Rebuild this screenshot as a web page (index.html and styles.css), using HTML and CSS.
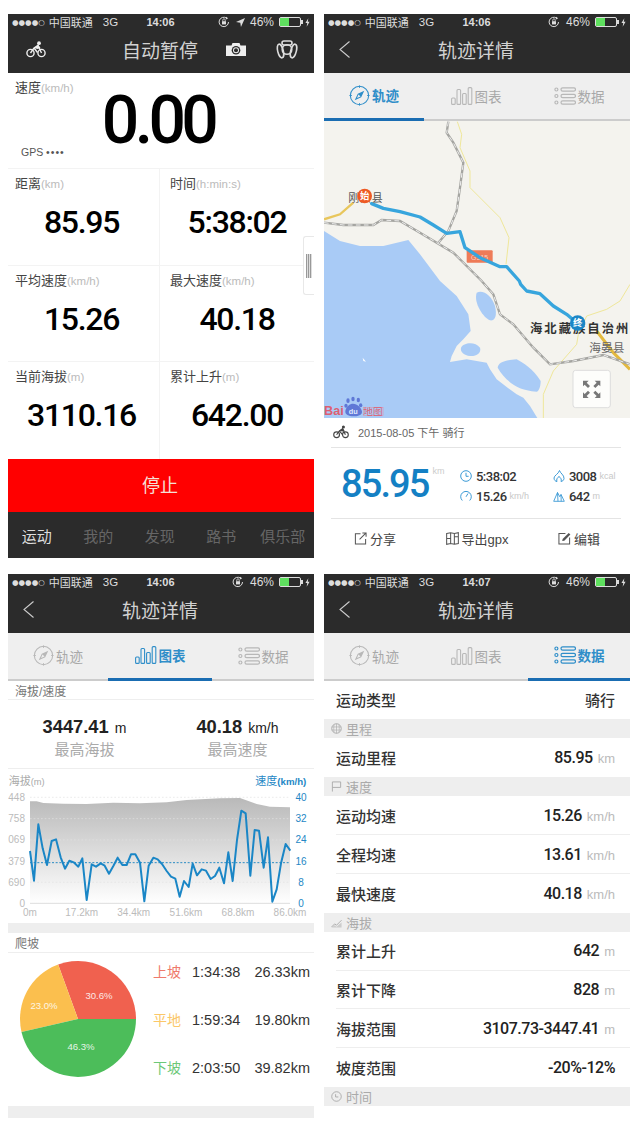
FILE: index.html
```html
<!DOCTYPE html>
<html lang="en">
<head>
    <meta charset="UTF-8">
    <meta name="viewport" content="width=device-width, initial-scale=1.0">
    <title>骑行记录</title>
    <link rel="stylesheet" href="styles.css">
</head>
<body>
    <!-- shared icons -->
    <svg class="sprite" aria-hidden="true">
        <symbol id="i-bike" viewBox="0 0 20 17">
            <g fill="none" stroke="currentColor" stroke-width="1.4">
                <circle cx="4.5" cy="12" r="3.6"/>
                <circle cx="15.5" cy="12" r="3.6"/>
                <path d="M4.5 12 8 7l4-2.500 3.500 7.500M8 7l3.500 4.500"/>
            </g>
            <circle cx="13" cy="2.200" r="1.900" fill="currentColor"/>
            <path d="M8 7l4-3.500 2.500 3.500-3 1z" fill="currentColor"/>
        </symbol>
        <symbol id="i-lock" viewBox="0 0 12 12">
            <path d="M10.500 6A4.700 4.700 0 1 1 8.500 2.100" fill="none" stroke="currentColor"/>
            <path d="M8 .8 10.200 2.300 8 3.600z" fill="currentColor"/>
            <rect x="4" y="5.200" width="4" height="3.200" fill="currentColor"/>
            <path d="M4.800 5.200V4a1.200 1.200 0 0 1 2.400 0v1.200" fill="none" stroke="currentColor" stroke-width=".8"/>
        </symbol>
        <symbol id="i-bolt" viewBox="0 0 6 10">
            <path d="M4 0 .5 5.500H2.700L2 10l3.500-5.800H3.300z" fill="currentColor"/>
        </symbol>
        <symbol id="i-compass" viewBox="0 0 22 22">
            <circle cx="11" cy="11" r="9.600" fill="none" stroke="currentColor" stroke-width="1.100"/>
            <path d="M11 .5v2.500M11 19v2.500M.5 11H3M19 11h2.500" stroke="currentColor"/>
            <path d="M16 6 12.800 12.800 6 16 9.200 9.200z M9.900 9.900 8.400 13.600 12.100 12.100z" fill="currentColor" fill-rule="evenodd"/>
        </symbol>
        <symbol id="i-bars" viewBox="0 0 22 18">
            <g fill="none" stroke="currentColor" stroke-width="1.100">
                <rect x=".6" y="11" width="3.600" height="6.400" rx="1"/>
                <rect x="6" y="2.500" width="3.600" height="14.900" rx="1"/>
                <rect x="11.600" y="6.500" width="3.600" height="10.900" rx="1"/>
                <rect x="17.200" y=".6" width="3.600" height="16.800" rx="1"/>
            </g>
        </symbol>
        <symbol id="i-list" viewBox="0 0 22 18">
            <g fill="none" stroke="currentColor" stroke-width="1.200">
                <circle cx="2.400" cy="2.500" r="1.500"/>
                <circle cx="2.400" cy="9" r="1.500"/>
                <circle cx="2.400" cy="15.500" r="1.500"/>
                <rect x="7" y=".8" width="14.500" height="3.400" rx="1.700"/>
                <rect x="7" y="7.300" width="14.500" height="3.400" rx="1.700"/>
                <rect x="7" y="13.800" width="14.500" height="3.400" rx="1.700"/>
            </g>
        </symbol>
        <symbol id="i-clock" viewBox="0 0 12 12">
            <circle cx="6" cy="6" r="5.300" fill="none" stroke="currentColor"/>
            <path d="M6 2.800V6.300H8.600" fill="none" stroke="currentColor"/>
        </symbol>
        <symbol id="i-gauge" viewBox="0 0 12 12">
            <path d="M2.300 10.500a5.300 5.300 0 1 1 7.400 0" fill="none" stroke="currentColor"/>
            <path d="M6 6.800 8 3.500" stroke="currentColor"/>
        </symbol>
        <symbol id="i-flame" viewBox="0 0 12 12">
            <path d="M6.500.5C7 3 11.300 5 11 8.500 10.800 10.500 9 11.500 8 11.500 9 9.500 7.500 7.500 6 6.500 4.500 7.500 3 9.500 4 11.500 2.500 11.500 1 10 1 8 1 5.500 5.500 4 6.500.5z" fill="none" stroke="currentColor"/>
        </symbol>
        <symbol id="i-peak" viewBox="0 0 12 12">
            <path d="M.7 11.300 4.500 2.500 6.700 6.700 8 4.500 11.300 11.300zM4.500 2.500 5 11.300M8 4.500 8.200 11.300" fill="none" stroke="currentColor" stroke-width=".9"/>
        </symbol>
        <symbol id="i-share" viewBox="0 0 14 14">
            <path d="M7 2H1.500V13H12.500V7.500M6 8 13 1M9 1H13V5" fill="none" stroke="currentColor" stroke-width="1.100"/>
        </symbol>
        <symbol id="i-export" viewBox="0 0 14 14">
            <path d="M.7 1.500 5 .7 9 1.500 13.300.7V12.500L9 13.300 5 12.500.7 13.300zM5 .7V12.500M9 1.500V13.300M.7 7H5M9 5H13.300" fill="none" stroke="currentColor" stroke-width="1.100"/>
        </symbol>
        <symbol id="i-edit" viewBox="0 0 14 14">
            <path d="M8 1.500H1V13H12.500V6" fill="none" stroke="currentColor" stroke-width="1.100"/>
            <path d="M4.500 9.800 5 7.500 11.500 1 13.300 2.800 6.800 9.300z" fill="currentColor"/>
        </symbol>
        <symbol id="i-globe" viewBox="0 0 12 12">
            <circle cx="6" cy="6" r="5.200" fill="none" stroke="currentColor"/>
            <path d="M1 4.300H11M1 7.700H11M6 .8V11.200M3.500 1.500C2.800 4 2.800 8 3.500 10.500M8.500 1.500C9.200 4 9.200 8 8.500 10.500" fill="none" stroke="currentColor" stroke-width=".7"/>
        </symbol>
        <symbol id="i-flag" viewBox="0 0 12 12">
            <path d="M1.500 11.500V1H10.500V7H1.500" fill="none" stroke="currentColor"/>
        </symbol>
        <symbol id="i-slope" viewBox="0 0 12 12">
            <path d="M.5 11 4 7.500 6 9 11.500 3.500" fill="none" stroke="currentColor"/>
            <path d="M.5 11.500H11.500V6L6 10.500 4 9z" fill="currentColor" opacity=".5"/>
        </symbol>
        <symbol id="i-play" viewBox="0 0 12 12">
            <circle cx="6" cy="6" r="5.200" fill="none" stroke="currentColor"/>
            <path d="M5 3.500V6.500H8" fill="none" stroke="currentColor"/>
        </symbol>
    </svg>

    <div class="sheet">

        <!-- riding screen -->
        <section class="phone">
            <div class="status">
                <div class="status-left"><span class="dots">●●●●○</span><span>中国联通</span><span class="net">3G</span></div>
                <div class="status-time">14:06</div>
                <div class="status-right">
                    <svg class="s-lock"><use href="#i-lock"/></svg>
                    <svg class="s-arrow" viewBox="0 0 10 10"><path d="M10 0 0 4.500 4.800 5.200 5.500 10z" fill="currentColor"/></svg>
                    <span>46%</span>
                    <span class="batt"><i></i></span>
                    <svg class="s-bolt"><use href="#i-bolt"/></svg>
                </div>
            </div>
            <div class="nav nav-ride">
                <svg class="nav-bike"><use href="#i-bike"/></svg>
                <h1>自动暂停</h1>
                <div class="nav-tools">
                    <svg class="nav-camera" viewBox="0 0 20 13">
                        <path d="M0 2.500H5.500L6.500 0H13.500L14.500 2.500H20V13H0z" fill="#eee"/>
                        <circle cx="10" cy="7.300" r="4.300" fill="#2b2b2b"/>
                        <circle cx="10" cy="7.300" r="3" fill="#eee"/>
                        <circle cx="10" cy="7.300" r="2" fill="#2b2b2b"/>
                    </svg>
                    <svg class="nav-friends" viewBox="0 0 22 20">
                        <g fill="none" stroke="#ddd" stroke-width="1.600">
                            <rect x="6" y="1" width="10" height="4" rx="2"/>
                            <circle cx="11" cy="9.500" r="4.800"/>
                            <ellipse cx="4.500" cy="11" rx="2.800" ry="7" transform="rotate(-14 4.500 11)"/>
                            <ellipse cx="17.500" cy="11" rx="2.800" ry="7" transform="rotate(14 17.500 11)"/>
                        </g>
                    </svg>
                </div>
            </div>
            <div class="ride-grid">
                <div class="cell cell-speed">
                    <div class="cell-label">速度<span>(km/h)</span></div>
                    <div class="speed-num">0.00</div>
                    <div class="gps">GPS <span>••••</span></div>
                </div>
                <div class="cell">
                    <div class="cell-label">距离<span>(km)</span></div>
                    <div class="cell-num">85.95</div>
                </div>
                <div class="cell">
                    <div class="cell-label">时间<span>(h:min:s)</span></div>
                    <div class="cell-num">5:38:02</div>
                </div>
                <div class="cell">
                    <div class="cell-label">平均速度<span>(km/h)</span></div>
                    <div class="cell-num">15.26</div>
                </div>
                <div class="cell">
                    <div class="cell-label">最大速度<span>(km/h)</span></div>
                    <div class="cell-num">40.18</div>
                </div>
                <div class="cell">
                    <div class="cell-label">当前海拔<span>(m)</span></div>
                    <div class="cell-num">3110.16</div>
                </div>
                <div class="cell">
                    <div class="cell-label">累计上升<span>(m)</span></div>
                    <div class="cell-num">642.00</div>
                </div>
            </div>
            <div class="side-handle"><i></i></div>
            <button class="stop">停止</button>
            <div class="bottom-tabs">
                <span class="on">运动</span><span>我的</span><span>发现</span><span>路书</span><span>俱乐部</span>
            </div>
        </section>

        <!-- track tab -->
        <section class="phone">
            <div class="status">
                <div class="status-left"><span class="dots">●●●●○</span><span>中国联通</span><span class="net">3G</span></div>
                <div class="status-time">14:06</div>
                <div class="status-right">
                    <svg class="s-lock"><use href="#i-lock"/></svg>
                    <span>46%</span>
                    <span class="batt"><i></i></span>
                    <svg class="s-bolt"><use href="#i-bolt"/></svg>
                </div>
            </div>
            <div class="nav">
                <svg class="back" viewBox="0 0 11 17"><path d="M10.500.5 1 8.500 10.500 16.500" fill="none" stroke="#ccc" stroke-width="1.100"/></svg>
                <h1>轨迹详情</h1>
                <div></div>
            </div>
            <div class="tabs">
                <div class="tab on"><svg class="t-compass"><use href="#i-compass"/></svg>轨迹</div>
                <div class="tab"><svg class="t-icon"><use href="#i-bars"/></svg>图表</div>
                <div class="tab"><svg class="t-icon"><use href="#i-list"/></svg>数据</div>
            </div>
            <svg class="map" viewBox="12 360 918 891">
                <rect x="12" y="360" width="918" height="891" fill="#f4f3ee"/>
                <g fill="#a9cbf6">
                    <path d="M12 690 60 720 120 735 190 735 265 717 300 760 360 840 410 885 445 940 452 990 430 1015 410 1035 395 1065 390 1083 440 1075 500 1085 510 1105 530 1135 560 1158 590 1180 610 1190 630 1215 652 1251H12z"/>
                    <path d="M470 875C490 865 515 885 525 915 532 945 525 960 510 958 490 950 460 905 470 875z"/>
                    <path d="M423 1040C430 1025 465 1020 480 1040 485 1055 470 1066 450 1065 432 1063 420 1052 423 1040z"/>
                    <path d="M533 1100C535 1085 550 1078 590 1075 610 1085 640 1105 662 1140 662 1160 655 1172 650 1172 630 1172 610 1165 600 1162 575 1150 550 1130 533 1100z"/>
                </g>
                <path d="M128 1070 138 1082 130 1080z" fill="#fff"/>
                <g fill="none" stroke="#efe79a" stroke-width="3">
                    <path d="M412 362 425 400 420 440 450 510 450 560 540 650 567 710 558 790"/>
                    <path d="M930 850 900 900 860 925 800 945 775 1000 770 1030 700 1110 670 1180V1251"/>
                </g>
                <path d="M12 655 60 640 100 605" fill="none" stroke="#e8c65c" stroke-width="7"/>
                <path d="M830 990 880 1055 930 1105" fill="none" stroke="#e3b93f" stroke-width="9"/>
                <g fill="none" stroke="#a5a5a1" stroke-width="7">
                    <path d="M385 362 380 395 400 425 430 485 420 560 410 630 385 690 355 725"/>
                    <path d="M12 665 70 672 160 672 185 657 240 660 300 695 400 755 485 840 520 880 540 940 580 970 640 1040 690 1090 760 1080 850 1062 930 1090"/>
                </g>
                <g fill="none" stroke="#eee" stroke-width="3" stroke-dasharray="14 10">
                    <path d="M385 362 380 395 400 425 430 485 420 560 410 630 385 690 355 725"/>
                    <path d="M12 665 70 672 160 672 185 657 240 660 300 695 400 755 485 840 520 880 540 940 580 970 640 1040 690 1090 760 1080 850 1062 930 1090"/>
                </g>
                <rect x="440" y="748" width="78" height="37" rx="3" fill="#ee7b58"/>
                <text x="479" y="777" class="m-badge">G315</text>
                <path d="M155 608 190 622 240 632 300 648 340 672 380 697 420 692 435 740 480 770 540 797 560 797 598 840 602 850 620 870 660 878 700 915 740 940 770 965" fill="none" stroke="#37a5dd" stroke-width="10" stroke-linejoin="round" stroke-linecap="round"/>
                <text x="85" y="602" class="m-county">刚察县</text>
                <circle cx="134" cy="585" r="22" fill="#ee5a24"/>
                <text x="134" y="595" class="m-pin">始</text>
                <text x="630" y="995" class="m-region">海北藏族自治州</text>
                <circle cx="773" cy="966" r="23" fill="#1b86c6"/>
                <text x="773" y="976" class="m-pin">终</text>
                <text x="808" y="1052" class="m-town">海晏县</text>
                <rect x="759" y="1108" width="112" height="112" rx="8" fill="#fdfdfb" stroke="#ddd" stroke-width="3"/>
                <path d="M789 1139H806L800 1145 810 1155 804 1161 794 1151 789 1156zM841 1139H824L830 1145 820 1155 826 1161 836 1151 841 1156zM789 1191H806L800 1185 810 1175 804 1169 794 1179 789 1174zM841 1191H824L830 1185 820 1175 826 1169 836 1179 841 1174z" fill="#777"/>
                <text x="12" y="1243" class="m-bai">Bai</text>
                <g fill="#5f78d6">
                    <ellipse cx="84" cy="1199" rx="5" ry="7"/>
                    <ellipse cx="99" cy="1194" rx="5" ry="7"/>
                    <ellipse cx="115" cy="1197" rx="5" ry="7"/>
                    <ellipse cx="122" cy="1213" rx="5" ry="6"/>
                    <ellipse cx="78" cy="1214" rx="5" ry="6"/>
                    <path d="M76 1230C78 1216 90 1208 99 1208 112 1208 124 1220 126 1232 126 1242 114 1246 100 1246 86 1246 75 1241 76 1230z"/>
                </g>
                <text x="100" y="1240" class="m-du">du</text>
                <rect x="131" y="1219" width="58" height="25" fill="none" stroke="#e2899a" stroke-width="1.500"/>
                <text x="130" y="1242" class="m-map">地图</text>
            </svg>
            <div class="ride-info">
                <svg class="info-bike"><use href="#i-bike"/></svg>
                <span>2015-08-05 下午 骑行</span>
            </div>
            <div class="summary">
                <div class="sum-big">85.95<sup>km</sup></div>
                <div class="sum-col">
                    <div><svg><use href="#i-clock"/></svg><b>5:38:02</b></div>
                    <div><svg><use href="#i-gauge"/></svg><b>15.26</b><small>km/h</small></div>
                </div>
                <div class="sum-col">
                    <div><svg><use href="#i-flame"/></svg><b>3008</b><small>kcal</small></div>
                    <div><svg><use href="#i-peak"/></svg><b>642</b><small>m</small></div>
                </div>
            </div>
            <div class="actions">
                <div><svg><use href="#i-share"/></svg>分享</div>
                <div><svg><use href="#i-export"/></svg>导出gpx</div>
                <div><svg><use href="#i-edit"/></svg>编辑</div>
            </div>
        </section>

        <!-- chart tab -->
        <section class="phone">
            <div class="status">
                <div class="status-left"><span class="dots">●●●●○</span><span>中国联通</span><span class="net">3G</span></div>
                <div class="status-time">14:06</div>
                <div class="status-right">
                    <svg class="s-lock"><use href="#i-lock"/></svg>
                    <span>46%</span>
                    <span class="batt"><i></i></span>
                    <svg class="s-bolt"><use href="#i-bolt"/></svg>
                </div>
            </div>
            <div class="nav">
                <svg class="back" viewBox="0 0 11 17"><path d="M10.500.5 1 8.500 10.500 16.500" fill="none" stroke="#ccc" stroke-width="1.100"/></svg>
                <h1>轨迹详情</h1>
                <div></div>
            </div>
            <div class="tabs">
                <div class="tab"><svg class="t-compass"><use href="#i-compass"/></svg>轨迹</div>
                <div class="tab on"><svg class="t-icon"><use href="#i-bars"/></svg>图表</div>
                <div class="tab"><svg class="t-icon"><use href="#i-list"/></svg>数据</div>
            </div>
            <div class="sec-title">海拔/速度</div>
            <div class="peaks">
                <div><div class="peak-val">3447.41<span>m</span></div><div class="peak-label">最高海拔</div></div>
                <div><div class="peak-val">40.18<span>km/h</span></div><div class="peak-label">最高速度</div></div>
            </div>
            <svg class="chart" viewBox="24 -3 918 462">
                <defs>
                    <linearGradient id="elev" x1="0" y1="0" x2="0" y2="1">
                        <stop offset="0" stop-color="#b9b9b9"/>
                        <stop offset="1" stop-color="#ffffff"/>
                    </linearGradient>
                </defs>
                <text x="26" y="45" class="c-title">海拔<tspan class="c-unit">(m)</tspan></text>
                <text x="919" y="45" class="c-title c-blue c-end">速度<tspan class="c-bold">(km/h)</tspan></text>
                <path d="M90 94 110 94 130 99 190 101 260 102 340 98 420 100 500 97 560 90 660 85 720 84 770 102 810 110 870 112V400H90z" fill="url(#elev)"/>
                <g stroke="#e2e2e2" stroke-width="2" stroke-dasharray="5 6">
                    <path d="M90 82H870M90 146H870M90 210H870M90 273H870M90 337H870"/>
                </g>
                <path d="M90 400H870" stroke="#ccc" stroke-width="2"/>
                <path d="M90 278H870" stroke="#2b8cc4" stroke-width="3" stroke-dasharray="6 5"/>
                <polyline fill="none" stroke="#1a86c6" stroke-width="6" stroke-linejoin="round"
                    points="90,243 102,332 115,163 128,235 141,285 155,213 168,208 182,262 195,296 208,272 221,277 235,290 247,265 260,390 275,283 288,290 302,280 314,287 327,311 340,288 353,263 367,285 380,285 393,253 406,253 420,278 433,394 446,287 460,263 473,268 486,282 500,303 513,320 526,326 539,380 552,333 566,351 578,281 591,316 605,298 618,302 632,327 645,318 658,293 672,340 685,247 698,333 711,210 724,122 737,130 751,317 764,180 777,182 791,293 804,202 817,395 830,358 843,280 857,222 871,242"/>
                <g class="c-axis c-end">
                    <text x="75" y="92">448</text>
                    <text x="75" y="156">758</text>
                    <text x="75" y="220">069</text>
                    <text x="75" y="284">379</text>
                    <text x="75" y="347">690</text>
                    <text x="75" y="410">0</text>
                </g>
                <g class="c-axis c-blue c-mid">
                    <text x="903" y="92">40</text>
                    <text x="903" y="156">32</text>
                    <text x="903" y="220">24</text>
                    <text x="903" y="284">16</text>
                    <text x="903" y="347">8</text>
                    <text x="903" y="410">0</text>
                </g>
                <g class="c-axis c-mid">
                    <text x="90" y="438">0m</text>
                    <text x="245" y="438">17.2km</text>
                    <text x="401" y="438">34.4km</text>
                    <text x="558" y="438">51.6km</text>
                    <text x="714" y="438">68.8km</text>
                    <text x="870" y="438">86.0km</text>
                </g>
            </svg>
            <div class="band band-thin"></div>
            <div class="sec-title">爬坡</div>
            <div class="climb">
                <svg class="pie" viewBox="-60 -60 120 120">
                    <path d="M0 0 58 0A58 58 0 0 0 -19.840 -54.500z" fill="#f0614f"/>
                    <path d="M0 0 -19.840 -54.500A58 58 0 0 0 -56.500 13z" fill="#fbbf4e"/>
                    <path d="M0 0 -56.500 13A58 58 0 0 0 58 0z" fill="#4cbd5a"/>
                    <text x="21" y="-20" class="pie-text">30.6%</text>
                    <text x="-34" y="-10" class="pie-text">23.0%</text>
                    <text x="3" y="31" class="pie-text">46.3%</text>
                </svg>
                <div class="climb-list">
                    <div class="climb-row"><span class="c-up">上坡</span><span>1:34:38</span><span>26.33km</span></div>
                    <div class="climb-row"><span class="c-flat">平地</span><span>1:59:34</span><span>19.80km</span></div>
                    <div class="climb-row"><span class="c-down">下坡</span><span>2:03:50</span><span>39.82km</span></div>
                </div>
            </div>
            <div class="band band-end"></div>
        </section>

        <!-- data tab -->
        <section class="phone">
            <div class="status">
                <div class="status-left"><span class="dots">●●●●○</span><span>中国联通</span><span class="net">3G</span></div>
                <div class="status-time">14:07</div>
                <div class="status-right">
                    <svg class="s-lock"><use href="#i-lock"/></svg>
                    <span>46%</span>
                    <span class="batt"><i></i></span>
                    <svg class="s-bolt"><use href="#i-bolt"/></svg>
                </div>
            </div>
            <div class="nav">
                <svg class="back" viewBox="0 0 11 17"><path d="M10.500.5 1 8.500 10.500 16.500" fill="none" stroke="#ccc" stroke-width="1.100"/></svg>
                <h1>轨迹详情</h1>
                <div></div>
            </div>
            <div class="tabs">
                <div class="tab"><svg class="t-compass"><use href="#i-compass"/></svg>轨迹</div>
                <div class="tab"><svg class="t-icon"><use href="#i-bars"/></svg>图表</div>
                <div class="tab on"><svg class="t-icon"><use href="#i-list"/></svg>数据</div>
            </div>
            <div class="row"><div class="row-in"><span>运动类型</span><span class="zh">骑行</span></div></div>
            <div class="band"><svg><use href="#i-globe"/></svg>里程</div>
            <div class="row"><div class="row-in"><span>运动里程</span><span class="val">85.95<small>km</small></span></div></div>
            <div class="band"><svg><use href="#i-flag"/></svg>速度</div>
            <div class="row"><div class="row-in"><span>运动均速</span><span class="val">15.26<small>km/h</small></span></div></div>
            <div class="row"><div class="row-in"><span>全程均速</span><span class="val">13.61<small>km/h</small></span></div></div>
            <div class="row"><div class="row-in"><span>最快速度</span><span class="val">40.18<small>km/h</small></span></div></div>
            <div class="band"><svg><use href="#i-slope"/></svg>海拔</div>
            <div class="row"><div class="row-in"><span>累计上升</span><span class="val">642<small>m</small></span></div></div>
            <div class="row"><div class="row-in"><span>累计下降</span><span class="val">828<small>m</small></span></div></div>
            <div class="row"><div class="row-in"><span>海拔范围</span><span class="val">3107.73-3447.41<small>m</small></span></div></div>
            <div class="row"><div class="row-in"><span>坡度范围</span><span class="val">-20%-12%</span></div></div>
            <div class="band"><svg><use href="#i-play"/></svg>时间</div>
        </section>

    </div>
</body>
</html>
```

FILE: styles.css
```css
* {
    box-sizing: border-box;
}
body {
    margin: 0;
    background-color: #fff;
    font-family: "Liberation Sans", "Noto Sans CJK SC", sans-serif;
    color: #333;
}
.sprite {
    position: absolute;
    width: 0;
    height: 0;
}
.sheet {
    display: grid;
    grid-template-columns: 306px 306px;
    grid-auto-rows: 544px;
    column-gap: 10px;
    row-gap: 16px;
    padding: 14px 0 0 8px;
}
.phone {
    position: relative;
    overflow: hidden;
    background-color: #fff;
}

/* status bar */
.status {
    display: grid;
    grid-template-columns: 1fr auto 1fr;
    align-items: center;
    height: 13px;
    padding: 0 4px;
    background-color: #2b2b2b;
    color: #ddd;
    font-size: 11px;
}
.status-left {
    display: flex;
    align-items: center;
    gap: 4px;
}
.dots {
    font-family: "DejaVu Sans", sans-serif;
    font-size: 7.500px;
    letter-spacing: 0;
}
.net {
    margin-left: 6px;
    font-size: 11.500px;
}
.status-time {
    font-size: 11px;
    font-weight: bold;
    padding-right: 1px;
}
.status-right {
    display: flex;
    align-items: center;
    justify-content: flex-end;
    font-size: 12px;
}
.s-lock {
    width: 12px;
    height: 12px;
    margin-right: 6px;
}
.s-arrow {
    width: 9px;
    height: 9px;
    margin-right: 5px;
}
.s-bolt {
    width: 5px;
    height: 9px;
    margin-left: 2px;
}
.batt {
    position: relative;
    width: 22px;
    height: 10px;
    margin: 0 2px 0 5px;
    border: 1px solid #ddd;
    border-radius: 2px;
}
.batt i {
    display: block;
    width: 9px;
    height: 8px;
    background-color: #5fe05f;
}
.batt::after {
    content: "";
    position: absolute;
    right: -3px;
    top: 2px;
    width: 2px;
    height: 4px;
    background-color: #ddd;
}

/* nav */
.nav {
    display: grid;
    grid-template-columns: 1fr auto 1fr;
    align-items: center;
    height: 45.500px;
    background-color: #2b2b2b;
}
.nav h1 {
    margin: 0 2px 0 0;
    font-size: 19px;
    font-weight: normal;
    color: #d2d2d2;
}
.back {
    width: 11px;
    height: 17px;
    margin-left: 15px;
}
.nav-bike {
    width: 20px;
    height: 17px;
    margin-left: 18px;
    color: #eee;
}
.nav-tools {
    display: flex;
    align-items: center;
    justify-content: flex-end;
    gap: 30px;
    padding-right: 16px;
}
.nav-camera {
    width: 20px;
    height: 13px;
}
.nav-friends {
    width: 22px;
    height: 20px;
}

/* riding grid */
.ride-grid {
    display: grid;
    grid-template-columns: 152px 154px;
    grid-auto-rows: 96.500px;
}
.cell {
    border-bottom: 1px solid #f3f3f3;
    padding: 7px 0 0 7px;
}
.cell:nth-child(even) {
    border-right: 1px solid #f3f3f3;
}
.cell:nth-child(n+3):nth-child(odd) {
    padding-left: 10px;
}
.cell:nth-child(n+6) {
    border-bottom: 0;
}
.cell-speed {
    grid-column: 1 / 3;
    display: grid;
    padding: 7px 0 0 7px;
}
.cell-speed > * {
    grid-area: 1 / 1;
}
.cell-label {
    font-size: 13px;
    line-height: 16px;
    color: #444;
}
.cell-label span {
    font-size: 11.500px;
    color: #bbb;
}
.speed-num {
    justify-self: center;
    align-self: center;
    margin: -6px 0 0 -13px;
    font-family: Roboto, sans-serif;
    font-size: 66px;
    font-weight: 500;
    line-height: 1;
    letter-spacing: -.07em;
    color: #000;
}
.gps {
    align-self: end;
    margin: 0 0 10px 6px;
    font-size: 10.500px;
    color: #555;
}
.gps span {
    letter-spacing: 1px;
}
.cell-num {
    margin: 12px 0 0 -11px;
    font-family: Roboto, sans-serif;
    font-size: 32px;
    font-weight: 500;
    line-height: 36px;
    letter-spacing: -.04em;
    text-align: center;
    color: #000;
}
.cell:nth-child(odd) .cell-num {
    margin-left: -10px;
}
.side-handle {
    position: absolute;
    right: 0;
    top: 222px;
    width: 11px;
    height: 59px;
    background-color: #fff;
    border: 1px solid #e8e8e8;
    border-right: 0;
    border-radius: 3px 0 0 3px;
}
.side-handle i {
    display: block;
    width: 6px;
    height: 24px;
    margin: 17px 0 0 2px;
    background: repeating-linear-gradient(90deg, #999 0, #999 1px, #ddd 1px, #ddd 2px);
}
.stop {
    display: block;
    width: 100%;
    height: 53.500px;
    padding: 0 2px 2px 0;
    border: 0;
    background-color: #ff0000;
    color: #f6e0d8;
    font-family: inherit;
    font-size: 18px;
}
.bottom-tabs {
    display: grid;
    grid-template-columns: repeat(5, 61.500px);
    align-items: center;
    width: 308px;
    height: 46.500px;
    margin-left: -2px;
    background-color: #2b2b2b;
    color: #666;
    font-size: 15px;
    text-align: center;
}
.bottom-tabs .on {
    color: #ddd;
}

/* detail tabs */
.tabs {
    display: grid;
    grid-template-columns: 100px 104px 102px;
    height: 48px;
    background-color: #efefef;
}
.tab {
    display: flex;
    align-items: center;
    justify-content: center;
    gap: 2px;
    border-bottom: 2px solid #ccc;
    color: #a8a8a8;
    font-size: 13.500px;
}
.tab svg {
    color: #b8b8b8;
}
.tab.on {
    border-bottom: 3px solid #1a6db2;
    color: #2f8ec9;
    font-weight: bold;
}
.tab.on svg {
    color: #2f8ec9;
}
.t-compass {
    width: 21px;
    height: 21px;
}
.t-icon {
    width: 22px;
    height: 18px;
}

/* map */
.map {
    display: block;
    width: 306px;
    height: 297px;
}
.m-badge {
    font-size: 21px;
    fill: #f7d3c6;
    text-anchor: middle;
}
.m-county {
    font-size: 33px;
    letter-spacing: 2px;
    fill: #555;
}
.m-pin {
    font-size: 28px;
    font-weight: bold;
    fill: #fff;
    text-anchor: middle;
}
.m-region {
    font-size: 37px;
    font-weight: bold;
    letter-spacing: 6px;
    fill: #333;
}
.m-town {
    font-size: 35px;
    fill: #666;
}
.m-bai {
    font-size: 38px;
    font-weight: bold;
    fill: #dc5f72;
}
.m-du {
    font-size: 22px;
    font-weight: bold;
    fill: #dfe8ff;
    text-anchor: middle;
}
.m-map {
    font-size: 29px;
    fill: #dc5f72;
}

/* under the map */
.ride-info {
    display: flex;
    align-items: center;
    gap: 9px;
    height: 30px;
    margin: 0 9px 0 7px;
    padding-left: 2px;
    border-bottom: 1px solid #e4e4e4;
    color: #666;
    font-size: 11px;
}
.info-bike {
    width: 16px;
    height: 14px;
    color: #444;
}
.summary {
    display: grid;
    grid-template-columns: 119px 93px 1fr;
    align-items: center;
    height: 71px;
    margin: 0 9px 0 7px;
    padding-left: 10px;
    border-bottom: 1px solid #e4e4e4;
}
.sum-big {
    display: flex;
    padding-top: 2px;
    font-family: Roboto, sans-serif;
    font-size: 38px;
    font-weight: 500;
    line-height: 40px;
    letter-spacing: -.05em;
    color: #1480c4;
}
.sum-big sup {
    margin: -3px 0 0 4px;
    font-family: "Liberation Sans", sans-serif;
    font-size: 9px;
    font-weight: normal;
    line-height: 20px;
    letter-spacing: 0;
    color: #ccc;
}
.sum-col {
    margin-top: 7px;
}
.sum-col div {
    display: flex;
    align-items: center;
    height: 20px;
}
.sum-col svg {
    width: 12px;
    height: 12px;
    margin-right: 4px;
    color: #3d9bd6;
}
.sum-col b {
    font-family: Roboto, sans-serif;
    font-size: 13px;
    font-weight: 500;
    letter-spacing: -.04em;
    color: #333;
}
.sum-col small {
    margin-left: 3px;
    font-size: 9px;
    color: #c8c8c8;
}
.actions {
    display: grid;
    grid-template-columns: repeat(3, 1fr);
    align-items: center;
    height: 39px;
    padding-top: 1px;
    color: #444;
    font-size: 13px;
}
.actions div {
    display: flex;
    align-items: center;
    justify-content: center;
    gap: 3px;
}
.actions svg {
    width: 13px;
    height: 13px;
    color: #555;
}

/* chart tab */
.sec-title {
    height: 19.500px;
    padding: 2px 0 0 7px;
    border-bottom: 1px solid #eee;
    color: #777;
    font-size: 12px;
    line-height: 18px;
}
.peaks {
    display: grid;
    grid-template-columns: 1fr 1fr;
    align-items: center;
    height: 69px;
    padding-top: 8px;
    border-bottom: 1px solid #eee;
    text-align: center;
}
.peak-val {
    font-size: 18.300px;
    font-weight: bold;
    line-height: 22px;
    color: #222;
}
.peak-val span {
    margin-left: 6px;
    font-size: 14px;
    font-weight: normal;
}
.peak-label {
    font-size: 15px;
    line-height: 22px;
    color: #aaa;
}
.chart {
    display: block;
    width: 306px;
    height: 154px;
}
.c-title {
    font-size: 33px;
    fill: #aaa;
}
.c-unit {
    font-size: 28px;
}
.c-bold {
    font-size: 29px;
    font-weight: bold;
}
.chart .c-blue {
    fill: #2487c5;
}
.c-axis {
    font-size: 30px;
    fill: #bbb;
}
.c-end {
    text-anchor: end;
}
.c-mid {
    text-anchor: middle;
}
.band {
    display: flex;
    align-items: center;
    gap: 4px;
    height: 19.300px;
    padding-left: 7px;
    background-color: #eee;
    color: #aaa;
    font-size: 13px;
}
.band svg {
    width: 11px;
    height: 11px;
}
.band-thin {
    height: 10px;
}
.band-end {
    height: 12px;
}
.climb {
    display: flex;
    height: 153.500px;
}
.pie {
    width: 120px;
    height: 120px;
    margin: 6px 0 0 10px;
}
.pie-text {
    font-size: 9.600px;
    fill: #fff;
    text-anchor: middle;
    opacity: .85;
}
.climb-list {
    display: flex;
    flex-direction: column;
    gap: 24px;
    flex: 1;
    padding: 7px 4px 0 15px;
}
.climb-row {
    display: grid;
    grid-template-columns: 39px 58px 1fr;
    height: 24px;
    font-size: 14.500px;
    line-height: 24px;
}
.climb-row span:last-child {
    text-align: right;
}
.c-up {
    color: #ef7a6c;
    font-size: 14px;
}
.c-flat {
    color: #fbc768;
    font-size: 14px;
}
.c-down {
    color: #6cc878;
    font-size: 14px;
}

/* data tab */
.row {
    height: 38.700px;
    padding-left: 12px;
}
.row-in {
    display: flex;
    align-items: center;
    justify-content: space-between;
    height: 100%;
    padding-right: 15px;
    border-bottom: 1px solid #eee;
    font-size: 15px;
    font-weight: 500;
    color: #333;
}
.row:has(+ .band) .row-in {
    border-bottom: 0;
}
.val {
    font-family: Roboto, sans-serif;
    font-size: 16px;
    font-weight: 500;
    letter-spacing: -.03em;
    color: #222;
}
.val small {
    margin-left: 5px;
    font-family: "Liberation Sans", sans-serif;
    font-size: 13px;
    font-weight: normal;
    letter-spacing: 0;
    color: #bbb;
}
```
